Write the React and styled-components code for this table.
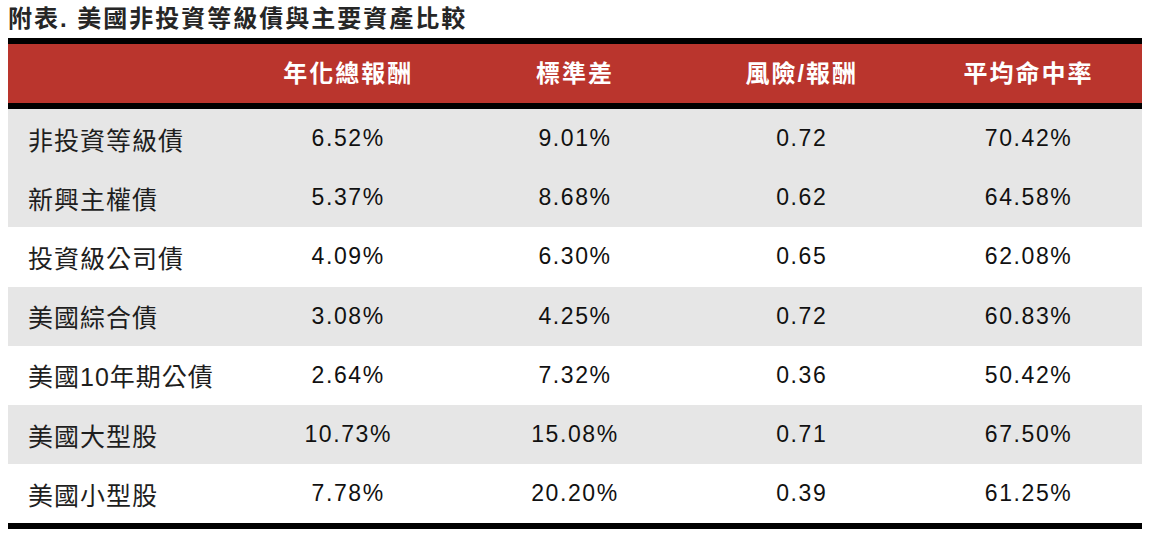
import React from "react";
import styled, { createGlobalStyle } from "styled-components";

const GlobalStyle = createGlobalStyle`
  body {
    margin: 0 8px;
    background: #ffffff;
    font-family: "Liberation Sans", "Noto Sans CJK TC", sans-serif;
  }
`;

const Title = styled.h1`
  margin: 0;
  height: 38px;
  line-height: 38px;
  font-size: 24px;
  font-weight: 700;
  letter-spacing: 2px;
  color: #262626;
  white-space: nowrap;
`;

const Table = styled.div`
  border-top: 6px solid #000;
  border-bottom: 6px solid #000;
`;

const Grid = styled.div`
  display: grid;
  grid-template-columns: repeat(5, 1fr);
  align-items: center;
`;

const HeaderRow = styled(Grid)`
  height: 59px;
  background: #ba352d;
  border-bottom: 6px solid #000;
`;

const HeadCell = styled.div`
  text-align: center;
  color: #ffffff;
  font-size: 24px;
  font-weight: 700;
  letter-spacing: 2px;
  padding-bottom: 5px;
`;

const Row = styled(Grid)`
  height: 59.2px;
  background: ${(p) => (p.$shade ? "#e6e6e6" : "#ffffff")};
`;

const Label = styled.div`
  padding-left: 20px;
  font-size: 25px;
  letter-spacing: 1px;
  color: #1e1e1e;
`;

const Value = styled.div`
  text-align: center;
  font-size: 23px;
  letter-spacing: 1.6px;
  color: #111;
`;

const heads = ["年化總報酬", "標準差", "風險/報酬", "平均命中率"];

const rows = [
  ["非投資等級債", "6.52%", "9.01%", "0.72", "70.42%", true],
  ["新興主權債", "5.37%", "8.68%", "0.62", "64.58%", true],
  ["投資級公司債", "4.09%", "6.30%", "0.65", "62.08%", false],
  ["美國綜合債", "3.08%", "4.25%", "0.72", "60.83%", true],
  ["美國10年期公債", "2.64%", "7.32%", "0.36", "50.42%", false],
  ["美國大型股", "10.73%", "15.08%", "0.71", "67.50%", true],
  ["美國小型股", "7.78%", "20.20%", "0.39", "61.25%", false],
];

export default function App() {
  return (
    <>
      <GlobalStyle />
      <Title>附表. 美國非投資等級債與主要資產比較</Title>
      <Table>
        <HeaderRow>
          <HeadCell />
          {heads.map((h) => (
            <HeadCell key={h}>{h}</HeadCell>
          ))}
        </HeaderRow>
        {rows.map(([name, a, b, c, d, shade]) => (
          <Row key={name} $shade={shade}>
            <Label>{name}</Label>
            <Value>{a}</Value>
            <Value>{b}</Value>
            <Value>{c}</Value>
            <Value>{d}</Value>
          </Row>
        ))}
      </Table>
    </>
  );
}
